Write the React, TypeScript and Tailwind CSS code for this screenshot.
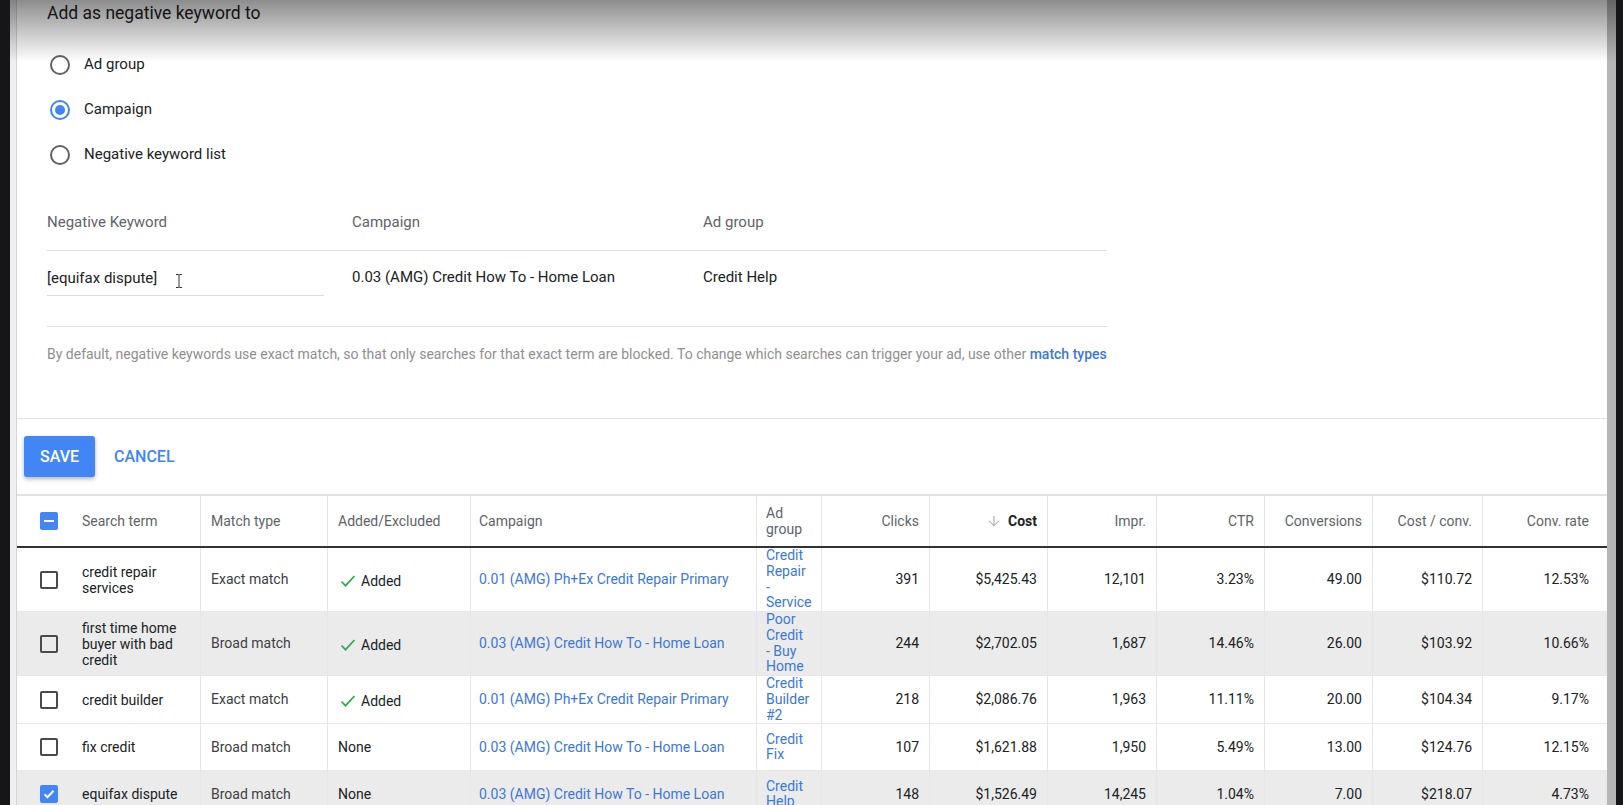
import { ArrowDown } from 'lucide-react';

const cols =
  'grid grid-cols-[184px_127px_143px_286px_65px_108px_118px_109px_108px_108px_110px_124px]';

type Row = {
  term: string;
  match: string;
  added: boolean;
  campaign: string;
  adGroup: string[];
  clicks: string;
  cost: string;
  impr: string;
  ctr: string;
  conv: string;
  costConv: string;
  convRate: string;
  shaded?: boolean;
  checked?: boolean;
};

const rows: Row[] = [
  {
    term: 'credit repair services',
    match: 'Exact match',
    added: true,
    campaign: '0.01 (AMG) Ph+Ex Credit Repair Primary',
    adGroup: ['Credit', 'Repair', '-', 'Service'],
    clicks: '391',
    cost: '$5,425.43',
    impr: '12,101',
    ctr: '3.23%',
    conv: '49.00',
    costConv: '$110.72',
    convRate: '12.53%',
  },
  {
    term: 'first time home buyer with bad credit',
    match: 'Broad match',
    added: true,
    campaign: '0.03 (AMG) Credit How To - Home Loan',
    adGroup: ['Poor', 'Credit', '- Buy', 'Home'],
    clicks: '244',
    cost: '$2,702.05',
    impr: '1,687',
    ctr: '14.46%',
    conv: '26.00',
    costConv: '$103.92',
    convRate: '10.66%',
    shaded: true,
  },
  {
    term: 'credit builder',
    match: 'Exact match',
    added: true,
    campaign: '0.01 (AMG) Ph+Ex Credit Repair Primary',
    adGroup: ['Credit', 'Builder', '#2'],
    clicks: '218',
    cost: '$2,086.76',
    impr: '1,963',
    ctr: '11.11%',
    conv: '20.00',
    costConv: '$104.34',
    convRate: '9.17%',
  },
  {
    term: 'fix credit',
    match: 'Broad match',
    added: false,
    campaign: '0.03 (AMG) Credit How To - Home Loan',
    adGroup: ['Credit', 'Fix'],
    clicks: '107',
    cost: '$1,621.88',
    impr: '1,950',
    ctr: '5.49%',
    conv: '13.00',
    costConv: '$124.76',
    convRate: '12.15%',
  },
  {
    term: 'equifax dispute',
    match: 'Broad match',
    added: false,
    campaign: '0.03 (AMG) Credit How To - Home Loan',
    adGroup: ['Credit', 'Help'],
    clicks: '148',
    cost: '$1,526.49',
    impr: '14,245',
    ctr: '1.04%',
    conv: '7.00',
    costConv: '$218.07',
    convRate: '4.73%',
    shaded: true,
    checked: true,
  },
];

function Radio({ label, checked }: { label: string; checked?: boolean }) {
  return (
    <div className="flex h-[45px] items-center">
      <div
        className={`ml-[3px] flex h-[20px] w-[20px] items-center justify-center rounded-full border-2 ${
          checked ? 'border-[#4285f4]' : 'border-[#5f6368]'
        }`}
      >
        {checked && <div className="h-[10px] w-[10px] rounded-full bg-[#4285f4]" />}
      </div>
      <span className="ml-[14px] text-[15px] text-[#202124]">{label}</span>
    </div>
  );
}

function Checkbox({ state }: { state: 'off' | 'on' | 'some' }) {
  if (state === 'off') {
    return <div className="h-[18px] w-[18px] shrink-0 rounded-[2px] border-2 border-[#4a4a4a]" />;
  }
  return (
    <div className="flex h-[18px] w-[18px] shrink-0 items-center justify-center rounded-[2px] bg-[#4285f4]">
      {state === 'some' ? (
        <div className="h-[2px] w-[10px] bg-white" />
      ) : (
        <svg width="14" height="14" viewBox="0 0 14 14" fill="none">
          <path d="M2.5 7.2l3 3 6-6.4" stroke="white" strokeWidth="2" />
        </svg>
      )}
    </div>
  );
}

function Header() {
  const num = 'flex items-center justify-end border-r border-[#e6e6e6] pr-[10px]';
  return (
    <div className={`${cols} h-[52px] border-b-2 border-[#333] text-[14px] text-[#5f6368]`}>
      <div className="flex items-center border-r border-[#e6e6e6] pl-[23px]">
        <Checkbox state="some" />
        <span className="ml-[24px]">Search term</span>
      </div>
      <div className="flex items-center border-r border-[#e6e6e6] pl-[10px]">Match type</div>
      <div className="flex items-center border-r border-[#e6e6e6] pl-[10px]">Added/Excluded</div>
      <div className="flex items-center border-r border-[#e6e6e6] pl-[8px]">Campaign</div>
      <div className="flex items-center border-r border-[#e6e6e6] pl-[9px] pr-[7px] leading-[16px]">
        Ad group
      </div>
      <div className={num}>Clicks</div>
      <div className={`${num} gap-[6px]`}>
        <ArrowDown size={16} strokeWidth={1.5} className="text-[#9e9e9e]" />
        <span className="font-bold text-[#202124]">Cost</span>
      </div>
      <div className={num}>Impr.</div>
      <div className={num}>CTR</div>
      <div className={num}>Conversions</div>
      <div className={num}>Cost / conv.</div>
      <div className="flex items-center justify-end pr-[18px]">Conv. rate</div>
    </div>
  );
}

function TableRow({ r }: { r: Row }) {
  const num = 'flex items-center justify-end border-r border-[#e6e6e6] pr-[10px]';
  return (
    <div
      className={`${cols} min-h-[47px] border-b border-[#e6e6e6] text-[14px] text-[#202124] ${
        r.shaded ? 'bg-[#ebebeb]' : 'bg-white'
      }`}
    >
      <div className="flex items-center border-r border-[#e6e6e6] pl-[23px] pr-[10px]">
        <Checkbox state={r.checked ? 'on' : 'off'} />
        <span className="ml-[24px] leading-[16px]">{r.term}</span>
      </div>
      <div className="flex items-center border-r border-[#e6e6e6] pl-[10px] text-[#3c4043]">{r.match}</div>
      <div className="flex items-center border-r border-[#e6e6e6] pl-[10px]">
        {r.added ? (
          <span className="flex items-center pt-[3px]">
            <svg width="16" height="14" viewBox="0 0 16 14" fill="none" className="ml-[2px]">
              <path d="M1.5 7.5l4 4.2L14.5 2" stroke="#34a853" strokeWidth="1.8" />
            </svg>
            <span className="ml-[5px]">Added</span>
          </span>
        ) : (
          'None'
        )}
      </div>
      <div className="flex items-center border-r border-[#e6e6e6] pl-[8px] text-[#3c78d8]">{r.campaign}</div>
      <div className="flex flex-col justify-center border-r border-[#e6e6e6] pl-[9px] leading-[15.75px] text-[#3c78d8]">
        {r.adGroup.map((line) => (
          <span key={line}>{line}</span>
        ))}
      </div>
      <div className={num}>{r.clicks}</div>
      <div className={num}>{r.cost}</div>
      <div className={num}>{r.impr}</div>
      <div className={num}>{r.ctr}</div>
      <div className={num}>{r.conv}</div>
      <div className={num}>{r.costConv}</div>
      <div className="flex items-center justify-end pr-[18px]">{r.convRate}</div>
    </div>
  );
}

export default function App() {
  return (
    <div className="relative flex h-[805px] w-[1623px] overflow-hidden bg-[#141619] font-['Roboto',sans-serif]">
      <div className="w-[10px] shrink-0" />
      <div className="w-[7px] shrink-0 border-r border-[#d4d4d4] bg-[#efefef]" />

      <main className="w-[1590px] shrink-0 bg-white">
        <div className="pl-[30px]">
          <div className="h-[42px] pt-[2px] text-[17.5px] leading-[22px] text-[#202124]">
            Add as negative keyword to
          </div>
          <Radio label="Ad group" />
          <Radio label="Campaign" checked />
          <Radio label="Negative keyword list" />

          <div className="w-[1060px]">
            <div className="flex h-[74px] items-end border-b border-[#e0e0e0] pb-[18px] text-[15px] leading-[20px] text-[#5f6368]">
              <div className="w-[305px]">Negative Keyword</div>
              <div className="w-[351px]">Campaign</div>
              <div>Ad group</div>
            </div>
            <div className="flex h-[76px] border-b border-[#e0e0e0] text-[15px] leading-[20px] text-[#202124]">
              <div className="w-[305px]">
                <div className="flex w-[277px] items-center border-b border-[#dadada] pt-[16px] pb-[6px]">
                  <span>[equifax dispute]</span>
                  <svg width="8" height="16" viewBox="0 0 8 16" fill="none" className="ml-[18px] mt-[6px]">
                    <path d="M1 1.5h2.2c.5 0 .8.3.8.8M7 1.5H4.8c-.5 0-.8.3-.8.8v11.4c0 .5-.3.8-.8.8H1m3-.8c0 .5.3.8.8.8H7" stroke="#333" strokeWidth="1" />
                  </svg>
                </div>
              </div>
              <div className="w-[351px] pt-[16px]">0.03 (AMG) Credit How To - Home Loan</div>
              <div className="pt-[16px]">Credit Help</div>
            </div>
            <p className="mt-[17px] mb-[54px] text-[14px] leading-[20px] text-[#8f8f8f]">
              By default, negative keywords use exact match, so that only searches for that exact term are blocked. To
              change which searches can trigger your ad, use other{' '}
              <span className="font-medium text-[#3c78d8]">match types</span>
            </p>
          </div>
        </div>

        <div className="border-t border-[#e3e3e3] px-[7px] py-[17px]">
          <div className="flex items-center">
            <button className="h-[41px] rounded-[3px] bg-[#4285f4] px-[16px] text-[16px] font-medium text-white shadow-[0_2px_4px_rgba(0,0,0,0.3)]">
              SAVE
            </button>
            <button className="ml-[19px] text-[16px] font-medium text-[#4285f4]">CANCEL</button>
          </div>
        </div>

        <div className="border-t-2 border-[#e2e2e2]">
          <Header />
          {rows.map((r) => (
            <TableRow key={r.term} r={r} />
          ))}
        </div>
      </main>

      <div className="w-[9px] shrink-0 bg-[#b6b6b6]" />
      <div className="w-[7px] shrink-0" />

      <div className="pointer-events-none absolute top-0 right-[7px] left-[10px] h-[62px] bg-linear-to-b from-black/45 to-transparent" />
    </div>
  );
}
